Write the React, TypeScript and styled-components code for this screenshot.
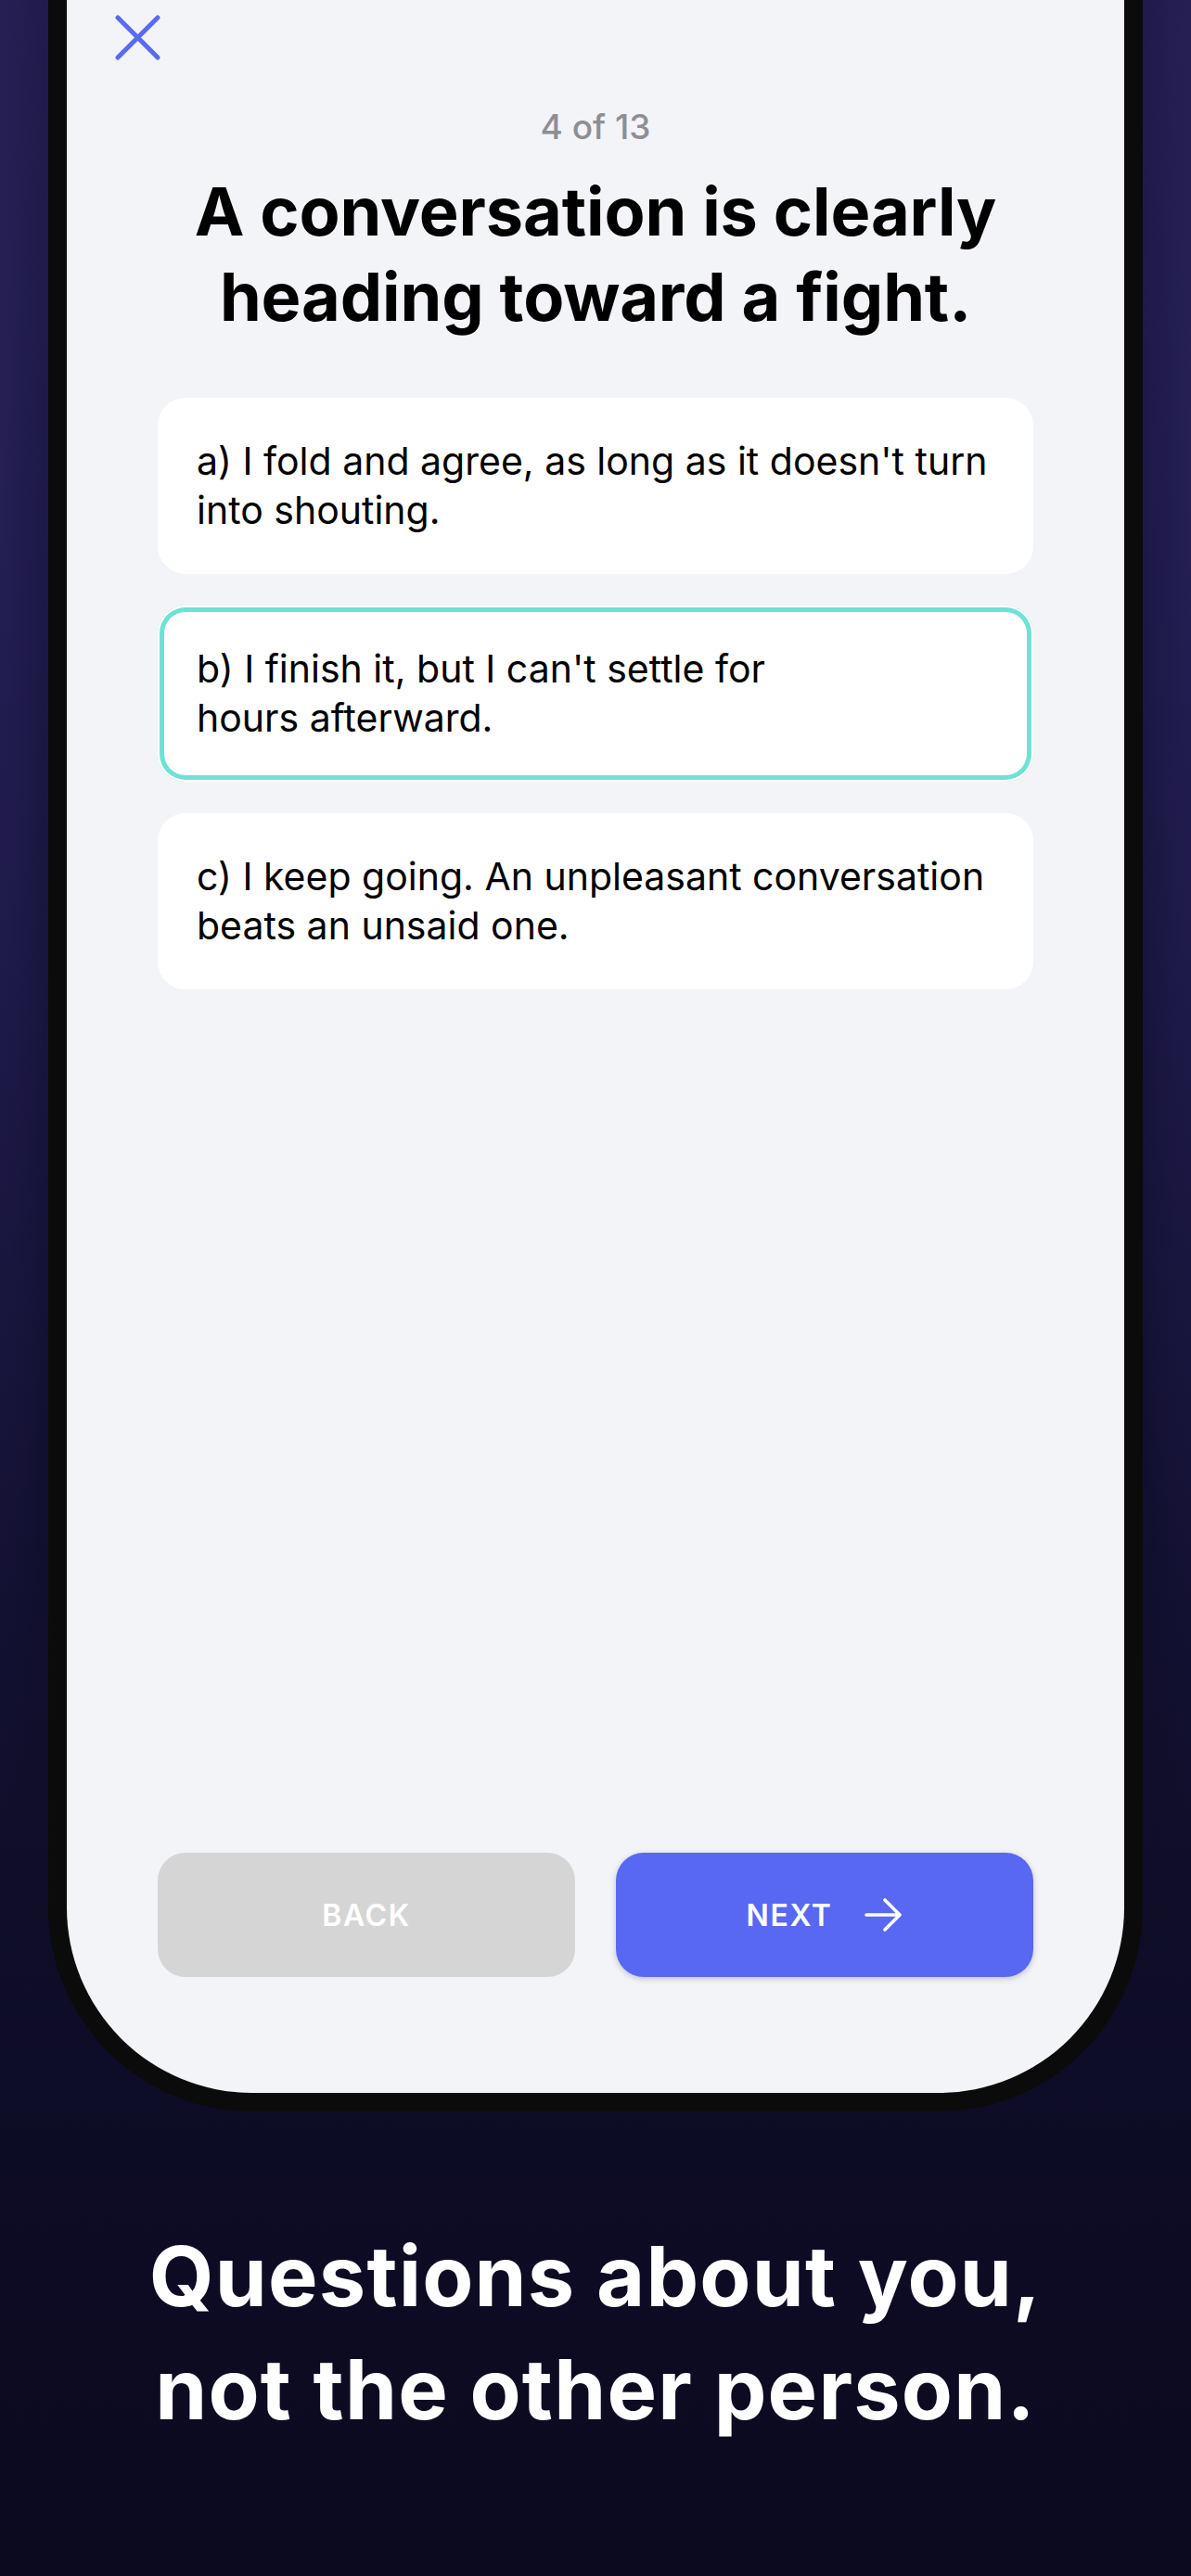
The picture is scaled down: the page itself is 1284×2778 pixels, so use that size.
import React, { useState } from 'react'
import styled, { createGlobalStyle, css } from 'styled-components'

const GlobalStyle = createGlobalStyle`
  html, body {
    margin: 0;
    padding: 0;
    background: #0c0b21;
  }

  * {
    box-sizing: border-box;
  }
`

const FONT = `'Inter', 'Liberation Sans', sans-serif`

const Page = styled.div`
  width: 1284px;
  height: 2778px;
  overflow: hidden;
  display: flex;
  flex-direction: column;
  align-items: center;
  padding: 0 52px;
  font-family: ${FONT};
  background:
    radial-gradient(70px 1500px at 0 500px, rgba(48, 40, 104, 0.5), rgba(48, 40, 104, 0)),
    radial-gradient(70px 1500px at 100% 500px, rgba(48, 40, 104, 0.5), rgba(48, 40, 104, 0)),
    linear-gradient(180deg, #1f1a48 0%, #17143d 30%, #110f2e 60%, #0b0a1f 100%);
`

const PhoneFrame = styled.div`
  width: 100%;
  border: 20px solid #0b0b0c;
  border-top: none;
  border-radius: 0 0 220px 220px;
  background: #0b0b0c;
`

const Screen = styled.div`
  height: 2257px;
  display: flex;
  flex-direction: column;
  padding: 16px 98px 125px;
  background: #f3f4f8;
  border-radius: 0 0 200px 200px;
  overflow: hidden;
`

const CloseButton = styled.button`
  width: 49px;
  height: 49px;
  margin-left: -46px;
  padding: 0;
  border: none;
  background: none;
  cursor: pointer;
  display: flex;

  svg {
    display: block;
  }
`

const Progress = styled.div`
  margin-top: 51px;
  font-size: 37px;
  line-height: 42px;
  font-weight: 500;
  color: #8e8e93;
  text-align: center;
`

const Question = styled.h1`
  margin: 24px 0 0;
  font-size: 72px;
  line-height: 92px;
  font-weight: 700;
  letter-spacing: -0.1px;
  color: #000;
  text-align: center;
`

const Options = styled.div`
  margin-top: 63px;
  display: flex;
  flex-direction: column;
  gap: 34px;
`

const OptionCard = styled.button<{ selected?: boolean }>`
  height: 190px;
  width: 100%;
  display: flex;
  align-items: center;
  padding: 0 42px;
  border: none;
  border-radius: 30px;
  background: #fff;
  text-align: left;
  font-family: ${FONT};
  font-size: 41px;
  line-height: 53px;
  font-weight: 400;
  color: #000;
  cursor: pointer;

  ${({ selected }) =>
    selected &&
    css`
      box-shadow: inset 0 0 0 2px #fff, inset 0 0 0 7px #6fe1d6;
    `}
`

const Spacer = styled.div`
  flex: 1;
`

const ButtonRow = styled.div`
  display: grid;
  grid-template-columns: 1fr 1fr;
  gap: 44px;
`

const NavButton = styled.button<{ primary?: boolean }>`
  height: 134px;
  display: flex;
  align-items: center;
  justify-content: center;
  gap: 34px;
  border: none;
  border-radius: 30px;
  font-family: ${FONT};
  font-size: 32px;
  font-weight: 600;
  letter-spacing: 1.6px;
  color: #fff;
  cursor: pointer;
  background: ${({ primary }) => (primary ? '#5968f3' : '#d5d5d5')};
  box-shadow: ${({ primary }) => (primary ? '0 2px 6px rgba(40, 40, 90, 0.25)' : 'none')};
`

const Caption = styled.h2`
  margin: 117px 0 0;
  font-size: 90px;
  line-height: 122px;
  font-weight: 700;
  letter-spacing: 1.2px;
  color: #fff;
  text-align: center;
`

const CloseIcon = () => (
  <svg width="49" height="49" viewBox="0 0 49 49" fill="none">
    <path d="M3 3 L46 46 M46 3 L3 46" stroke="#5a6af5" strokeWidth="5" strokeLinecap="round" />
  </svg>
)

const ArrowIcon = () => (
  <svg width="42" height="36" viewBox="0 0 42 36" fill="none">
    <path
      d="M3 18 H39 M23 2 L39 18 L23 34"
      stroke="#fff"
      strokeWidth="3.6"
      strokeLinecap="round"
      strokeLinejoin="round"
    />
  </svg>
)

const answers: React.ReactNode[] = [
  <>a) I fold and agree, as long as it doesn't turn into shouting.</>,
  <>
    b) I finish it, but I can't settle for
    <br />
    hours afterward.
  </>,
  <>c) I keep going. An unpleasant conversation beats an unsaid one.</>,
]

export default function App() {
  const [picked, setPicked] = useState(1)

  return (
    <>
      <GlobalStyle />
      <Page>
        <PhoneFrame>
          <Screen>
            <CloseButton aria-label="Close">
              <CloseIcon />
            </CloseButton>
            <Progress>4 of 13</Progress>
            <Question>
              A conversation is clearly
              <br />
              heading toward a fight.
            </Question>
            <Options>
              {answers.map((text, i) => (
                <OptionCard key={i} selected={picked === i} onClick={() => setPicked(i)}>
                  <span>{text}</span>
                </OptionCard>
              ))}
            </Options>
            <Spacer />
            <ButtonRow>
              <NavButton>BACK</NavButton>
              <NavButton primary>
                NEXT
                <ArrowIcon />
              </NavButton>
            </ButtonRow>
          </Screen>
        </PhoneFrame>
        <Caption>
          Questions about you,
          <br />
          not the other person.
        </Caption>
      </Page>
    </>
  )
}
